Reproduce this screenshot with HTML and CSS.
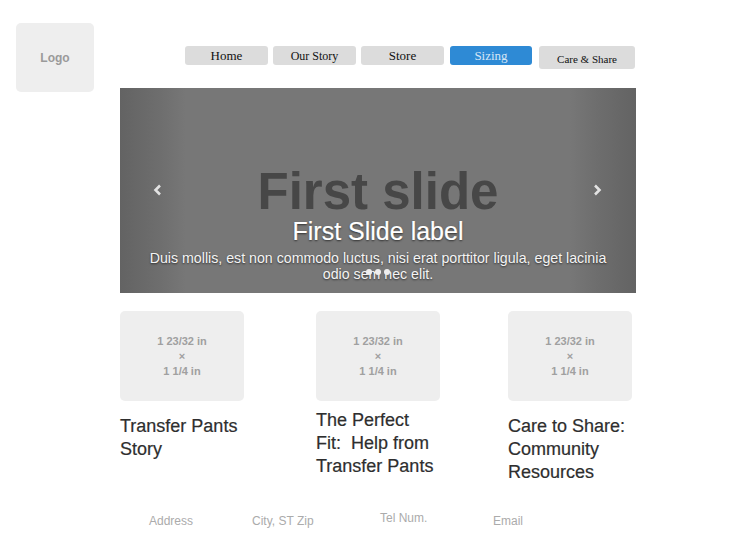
FILE: index.html
```html
<!DOCTYPE html>
<html>
<head>
<meta charset="utf-8">
<link rel="stylesheet" href="styles.css">
</head>
<body>
<header class="header">
  <div class="logo">Logo</div>
  <nav class="nav">
    <a class="nav-btn nav-home">Home</a>
    <a class="nav-btn nav-story">Our Story</a>
    <a class="nav-btn nav-store">Store</a>
    <a class="nav-btn nav-active">Sizing</a>
    <a class="nav-btn nav-care">Care &amp; Share</a>
  </nav>
</header>
<main class="main">
  <section class="carousel">
    <div class="slide">First slide</div>
    <svg class="arrow arrow-left" width="12" height="14" viewBox="0 0 12 14"><path d="M8 2.5 L3.5 7 L8 11.5" fill="none" stroke="#e2e2e2" stroke-width="2.6"/></svg>
    <svg class="arrow arrow-right" width="12" height="14" viewBox="0 0 12 14"><path d="M4 2.5 L8.5 7 L4 11.5" fill="none" stroke="#e2e2e2" stroke-width="2.6"/></svg>
    <div class="caption">
      <h3 class="caption-title">First Slide label</h3>
      <p class="caption-text">Duis mollis, est non commodo luctus, nisi erat porttitor ligula, eget lacinia odio sem nec elit.</p>
    </div>
    <ol class="indicators"><li class="dot"></li><li class="dot"></li><li class="dot"></li></ol>
  </section>
  <section class="cards">
    <div class="card">
      <div class="thumb">1 23/32 in<br>×<br>1 1/4 in</div>
      <h4 class="card-title">Transfer Pants Story</h4>
    </div>
    <div class="card">
      <div class="thumb">1 23/32 in<br>×<br>1 1/4 in</div>
      <h4 class="card-title card-title-high">The Perfect Fit:&nbsp; Help from Transfer Pants</h4>
    </div>
    <div class="card">
      <div class="thumb">1 23/32 in<br>×<br>1 1/4 in</div>
      <h4 class="card-title">Care to Share: Community Resources</h4>
    </div>
  </section>
</main>
<footer class="footer">
  <span class="f-item f-address">Address</span>
  <span class="f-item f-city">City, ST Zip</span>
  <span class="f-item f-tel">Tel Num.</span>
  <span class="f-item f-email">Email</span>
</footer>
</body>
</html>
```
FILE: styles.css
```css
* { box-sizing: border-box; }
html, body { margin: 0; padding: 0; background: #fff; }
body { font-family: "Liberation Sans", Arial, sans-serif; width: 756px; height: 554px; overflow: hidden; }

.header { display: flex; align-items: flex-start; height: 88px; padding: 23px 0 0 16px; }
.logo {
  width: 78px; height: 69px; margin-bottom: -4px;
  background: #eee; border-radius: 5px;
  display: flex; align-items: center; justify-content: center;
  color: #9a9a9a; font-weight: bold; font-size: 12px;
  position: relative; z-index: 1;
}
.nav { display: flex; align-items: flex-start; margin: 23px 0 0 91px; }
.nav-btn {
  display: flex; align-items: center; justify-content: center;
  width: 83px; height: 19px; margin-right: 5px; padding-top: 1px;
  background: #dcdcdc; border-radius: 3px;
  font-family: "Liberation Serif", "Times New Roman", serif; font-size: 13px; color: #111;
}
.nav-story { font-size: 12px; }
.nav-active { width: 82px; margin-left: 1px; margin-right: 7px; background: #2e8ad5; color: #d6e6f6; }
.nav-care { width: 96px; height: 23px; font-size: 11px; padding-top: 2px; }

.main { margin-left: 120px; width: 516px; }
.carousel {
  position: relative; height: 205px; overflow: hidden;
  background: linear-gradient(to right, #636363 0, #6e6e6e 40px, #777 66px, #777 450px, #6e6e6e 476px, #636363 100%);
}
.slide {
  text-align: center; padding-top: 82px;
  font-size: 51px; line-height: 44px; font-weight: bold; color: #474747;
}
.arrow { position: absolute; top: 95px; }
.arrow-left { left: 32px; }
.arrow-right { right: 33px; }
.caption { position: absolute; left: 20px; right: 20px; bottom: 11px; text-align: center; color: #fff; text-shadow: 0 1px 2px rgba(0,0,0,.6); }
.caption-title { margin: 0 0 6px; font-size: 25px; line-height: 26px; font-weight: normal; -webkit-text-stroke: 0.2px #fff; }
.caption-text { margin: 0; font-size: 14.2px; line-height: 16px; color: #f4f4f4; }
.indicators { position: absolute; left: 0; right: 0; bottom: 18px; margin: 0; padding: 0; list-style: none; display: flex; justify-content: center; gap: 3px; }
.dot { width: 6px; height: 6px; border-radius: 50%; background: #eee; }

.cards { display: grid; grid-template-columns: 196px 192px 124px; margin-top: 18px; }
.thumb {
  width: 124px; height: 90px; background: #eee; border-radius: 5px;
  display: flex; align-items: center; justify-content: center; text-align: center;
  color: #a0a0a0; font-size: 11px; font-weight: bold; line-height: 15px;
}
.card-title { margin: 14px 0 0; width: 124px; font-size: 18px; line-height: 23px; font-weight: normal; color: #2e2e2e; -webkit-text-stroke: 0.2px #2e2e2e; }
.card-title-high { margin-top: 8px; }

.footer { display: flex; align-items: flex-start; padding-left: 149px; margin-top: 30px; font-size: 12px; color: #ababab; }
.f-address { width: 103px; }
.f-city { width: 128px; }
.f-tel { width: 113px; margin-top: -3px; }
```
